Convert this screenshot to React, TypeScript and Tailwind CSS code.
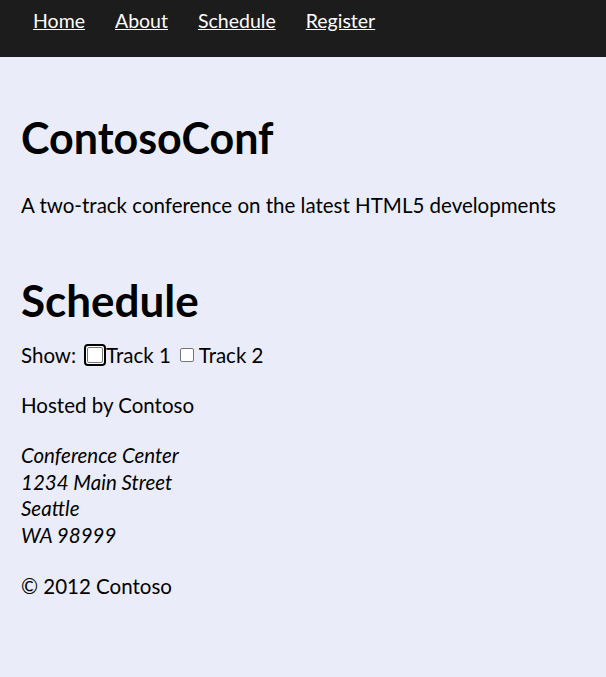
export default function App() {
  const font = { fontFamily: '"Lato", "Open Sans", sans-serif' };
  return (
    <div className="min-h-[677px] bg-[#eaedf9] text-black" style={font}>
      <nav className="h-[57px] bg-[#1c1c1c] flex items-start gap-[30px] pl-[33px] pt-[8px]">
        {["Home", "About", "Schedule", "Register"].map((t) => (
          <a key={t} href="#" className="text-white underline text-[19.5px] leading-[26px]">
            {t}
          </a>
        ))}
      </nav>
      <main className="px-[21px]">
        <h1 className="font-bold text-[43px] leading-[56px] mt-[53px]">ContosoConf</h1>
        <p className="text-[20.5px] leading-[26px] mt-[26px]">A two-track conference on the latest HTML5 developments</p>
        <h2 className="font-bold text-[44px] leading-[54px] mt-[55px]">Schedule</h2>
        <div className="flex items-center text-[20.5px] leading-[26px] mt-[15px]">
          <span>Show:</span>
          <span className="ml-[8px] w-[22px] h-[22px] rounded-[4px] border-2 border-black bg-white p-[1px] flex">
            <span className="w-full h-full rounded-[2px] border border-[#767676] bg-white" />
          </span>
          <span>Track 1</span>
          <span className="ml-[9px] mr-[5px] w-[14px] h-[14px] rounded-[2px] border border-[#767676] bg-white" />
          <span>Track 2</span>
        </div>
        <p className="text-[20.5px] leading-[26px] mt-[24px]">Hosted by Contoso</p>
        <address className="text-[20.5px] leading-[26.7px] mt-[24px] italic">
          Conference Center<br />1234 Main Street<br />Seattle<br />WA 98999
        </address>
        <p className="text-[20.5px] leading-[26px] mt-[24px]">© 2012 Contoso</p>
      </main>
    </div>
  );
}
